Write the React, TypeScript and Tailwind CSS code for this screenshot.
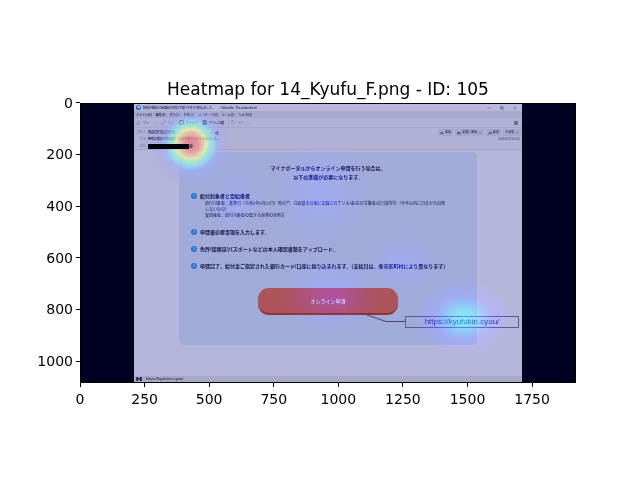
import React from "react";
import {
  BookUser,
  ChevronDown,
  Download,
  Forward,
  Menu,
  MessageSquare,
  Minus,
  Pencil,
  Reply,
  ReplyAll,
  Star,
  Tag,
  X,
  Copy,
} from "lucide-react";

const xTicks = [0, 250, 500, 750, 1000, 1250, 1500, 1750];
const yTicks = [0, 200, 400, 600, 800, 1000];
const menus = ["ファイル(F)", "編集(E)", "表示(V)", "移動(G)", "メッセージ(M)", "ツール(T)", "ヘルプ(H)"];

const icon = "size-[5px] shrink-0";
const smallIcon = "size-[4px] shrink-0";

function TitleBar() {
  return (
    <header className="flex h-[7px] items-center bg-[#b9b8da] px-[2px]">
      <svg viewBox="0 0 12 12" className="mr-[2px] size-[5px]" aria-hidden="true">
        <circle cx="6" cy="6" r="6" fill="#2358b4" />
        <path d="M2 3L8 2L11 6L8 9L4 6Z" fill="#b8c6ed" />
      </svg>
      <span className="text-[3px] font-medium leading-[6px]">特別定額給付金再給付申請手続き代行を始めました。</span>
      <span className="ml-[4px] text-[4px] leading-[6px]">- Mozilla Thunderbird</span>
      <div className="ml-auto flex gap-[9px] pr-[3px]">
        <button aria-label="最小化"><Minus className={smallIcon} /></button>
        <button aria-label="元に戻す"><Copy className={smallIcon} /></button>
        <button aria-label="閉じる"><X className={smallIcon} /></button>
      </div>
    </header>
  );
}

function Toolbar() {
  return (
    <div className="flex h-[10px] items-center border-b border-[#a5a4c9] bg-[#b1b0d5] px-[2px] text-[3px] leading-[6px]">
      <button className="flex items-center gap-[2px] text-[#77769e]"><Download className={icon} />受信<ChevronDown className="ml-[2px] size-[4px]" /></button>
      <button className="ml-[4px] flex items-center gap-[2px] text-[#77769e]"><Pencil className={icon} />作成</button>
      <button className="ml-[5px] flex items-center gap-[2px] font-bold"><MessageSquare className={icon} strokeWidth={4} />チャット</button>
      <button className="ml-[4px] flex items-center gap-[2px] font-bold"><BookUser className={icon} strokeWidth={4} />アドレス帳</button>
      <span className="ml-[4px] h-[7px] w-px bg-[#a09fc3]" />
      <button className="ml-[2px] flex items-center gap-[2px] text-[#77769e]"><Tag className={icon} />タグ<ChevronDown className="size-[4px]" /></button>
      <button className="ml-auto mr-[2px]" aria-label="メニュー"><Menu className={smallIcon} strokeWidth={4} /></button>
    </div>
  );
}

function MessageHeader() {
  const action = "flex h-[7px] items-center gap-px bg-[#a6a5ca] px-[2px]";
  return (
    <section className="h-[22px] border-b border-[#a4a3c7] bg-[#b1b0d5] pt-px text-[3px] leading-[7px]">
      <div className="flex h-[7px] items-center">
        <span className="w-[12px] text-right text-[#77769e]">差出人</span>
        <strong className="ml-[2px] text-[4px] font-medium">特別定額給付金</strong>
        <a href="mailto:info@soumu.go.jp" className="ml-px text-[4px] text-[#77769e]">&lt;info@soumu.go.jp&gt;</a>
        <Star className="ml-px size-[4px]" strokeWidth={5} />
        <div className="ml-auto flex gap-[2px] pr-px">
          <button className={action}><Reply className={smallIcon} strokeWidth={3} />返信</button>
          <button className={action}><ReplyAll className={smallIcon} strokeWidth={3} />全員に返信<ChevronDown className={smallIcon} /></button>
          <button className={action}><Forward className={smallIcon} strokeWidth={3} />転送</button>
          <button className={action}>その他<ChevronDown className={smallIcon} /></button>
        </div>
      </div>
      <div className="flex h-[7px] items-center">
        <span className="w-[12px] text-right text-[#77769e]">件名</span>
        <span className="ml-[2px] font-bold">特別定額給付金再給付申請手続き代行を始めました。</span>
        <time className="ml-auto pr-[2px] text-[#3c3b68]">2020/10/19 6:12</time>
      </div>
      <div className="flex h-[6px] items-center">
        <span className="w-[12px] text-right text-[#77769e]">宛先</span>
        <span className="relative z-10 ml-[2px] h-[5px] w-[41px] bg-[#00000f]" />
        <Star className="relative z-10 size-[4px]" strokeWidth={5} />
      </div>
    </section>
  );
}

function Step({ n, title, children }: { n: number; title: string; children?: React.ReactNode }) {
  return (
    <li className="flex gap-[3px]">
      <span className="mt-px flex size-[6px] shrink-0 items-center justify-center rounded-full bg-[#2475cf] text-[4px] leading-[6px] text-[#b8c9ee]">{n}</span>
      <div className="min-w-0">
        <h2 className="whitespace-nowrap text-[5px] font-bold leading-[8px]">{title}</h2>
        {children}
      </div>
    </li>
  );
}

function Mail() {
  return (
    <main className="relative h-[226px] bg-[#b5b5d9] px-[45px] pt-[2px]">
      <article className="flex h-[193px] flex-col rounded-[5px] bg-[#a0abd9] px-[12px] pt-[12px]">
        <p className="text-center text-[5px] font-bold leading-[9px]">
          マイナポータルからオンライン申請を行う場合は、
          <br />
          以下の準備が必要になります。
        </p>
        <ol className="mt-[10px] flex flex-col gap-[9px]">
          <Step n={1} title="給付対象者と受給権者">
            <div className="pl-[5px] pt-px text-[4px] leading-[6px] text-[#151548]">
              <p className="whitespace-nowrap">
                給付対象者：基準日（令和2年9月27日）時点で、住民基本台帳に記録されている/者/在日労働者/在日留学生（半年以内に日本から出国
                <br />
                しないもの）
              </p>
              <p>受給権者：給付対象者の属する世帯の世帯主</p>
            </div>
          </Step>
          <Step n={2} title="申請書必要事項を入力します。" />
          <Step n={3} title="免許/保険証/パスポートなどの本人確認書類をアップロード。" />
          <Step n={4} title="申請完了、給付金ご指定された銀行カード/口座に振り込まれます。（支給日は、各市区町村により異なります）" />
        </ol>
        <button className="mx-auto mt-[18px] h-[27px] w-[140px] shrink-0 rounded-[11px] border-b-2 border-[#98302f] bg-[#ad535a] text-[5px] font-medium leading-[8px] text-[#d6c8e6]">
          オンライン申請
        </button>
      </article>
      <svg viewBox="0 0 42 10" className="absolute right-[117px] top-[163px] h-[10px] w-[42px]" fill="none" aria-hidden="true">
        <path d="M0 0.5L23 8.5H42" stroke="#434377" />
      </svg>
      <a href="https://kyufukin.cyou/" className="absolute right-[3px] top-[166px] flex h-[12px] w-[114px] items-center justify-center border border-[#5b5a90] text-[8px] leading-[10px] text-[#30336c]">
        https://kyufukin.cyou/
      </a>
    </main>
  );
}

function Heat() {
  return (
    <div className="pointer-events-none absolute inset-0 overflow-hidden" aria-hidden="true">
      <div className="absolute left-[66px] top-[-4px] size-[88px] bg-[radial-gradient(circle,#f07a88b8_0px,#f58f8cb8_7px,#fcd09ab8_12px,#f4fda8b8_15px,#a4fdcab0_18px,#8ef0fa99_22px,#98b8ff80_26px,#a0a8ff4d_32px,#a2a5fb00_42px)]" />
      <div className="absolute right-[60px] top-[174px] h-[80px] w-[102px] bg-[radial-gradient(closest-side,#60e0e0ff_0%,#64d0e8ee_20%,#70a0ffcc_42%,#8080ffaa_58%,#8080ff00_100%)] mix-blend-overlay" />
      <div className="absolute left-[190px] top-[35px] h-[110px] w-[100px] bg-[radial-gradient(closest-side,#8080ffaa,#8080ff00)] mix-blend-overlay" />
      <div className="absolute left-[125px] top-[60px] h-[70px] w-[60px] bg-[radial-gradient(closest-side,#8080ff88,#8080ff00)] mix-blend-overlay" />
      <div className="absolute left-[200px] top-[150px] h-[80px] w-[100px] bg-[radial-gradient(closest-side,#8080ffcc,#8080ff00)] mix-blend-overlay" />
      <div className="absolute left-[280px] top-[130px] h-[60px] w-[80px] bg-[radial-gradient(closest-side,#8080ffaa,#8080ff00)] mix-blend-overlay" />
    </div>
  );
}

export default function App() {
  return (
    <div className="min-h-screen bg-white pl-[34px] pr-[64px] pt-[78px] font-['DejaVu_Sans',sans-serif] text-black">
      <h1 className="ml-[46px] text-center text-[17px] leading-[22px]">Heatmap for 14_Kyufu_F.png - ID: 105</h1>
      <div className="mt-[3px] flex">
        <div className="-mb-[6px] -mt-[26px] grid h-[310px] w-[46px] shrink-0 grid-rows-6">
          {yTicks.map((t) => (
            <div key={t} className="flex items-center justify-end gap-[3px] text-[14px] leading-[16px]">
              {t}
              <span className="h-px w-[4px] bg-black" />
            </div>
          ))}
        </div>
        <div className="min-w-0 flex-1">
          <div className="relative border border-black bg-[#000021] px-[53px]">
            <div className="bg-[#b5b5d9] font-['Liberation_Sans','Noto_Sans_CJK_JP',sans-serif] text-[#151441]">
              <TitleBar />
              <nav className="flex h-[7px] items-center gap-[4px] bg-[#a9a8cb] px-[2px] text-[3px] font-medium leading-[6px]">
                {menus.map((m) => (
                  <button key={m}>{m}</button>
                ))}
              </nav>
              <Toolbar />
              <MessageHeader />
              <Mail />
              <footer className="flex h-[6px] items-center gap-[4px] bg-[#a8a8ca] px-[2px] text-[4px] leading-[6px]">
                <svg viewBox="0 0 14 10" className="h-[4px] w-[6px]" fill="#25254f" aria-hidden="true">
                  <path d="M0 0H5V3H9V0H14V10H9V6H5V10H0Z" />
                </svg>
                https://kyufukin.cyou/
              </footer>
            </div>
            <Heat />
          </div>
          <div className="-ml-[6.51%] w-full">
            <div className="flex w-full">
              {xTicks.map((t) => (
                <div key={t} className="flex w-[13.02%] shrink-0 flex-col items-center gap-[4px] text-[14px] leading-[16px]">
                  <span className="h-[4px] w-px bg-black" />
                  {t}
                </div>
              ))}
            </div>
          </div>
        </div>
      </div>
    </div>
  );
}
